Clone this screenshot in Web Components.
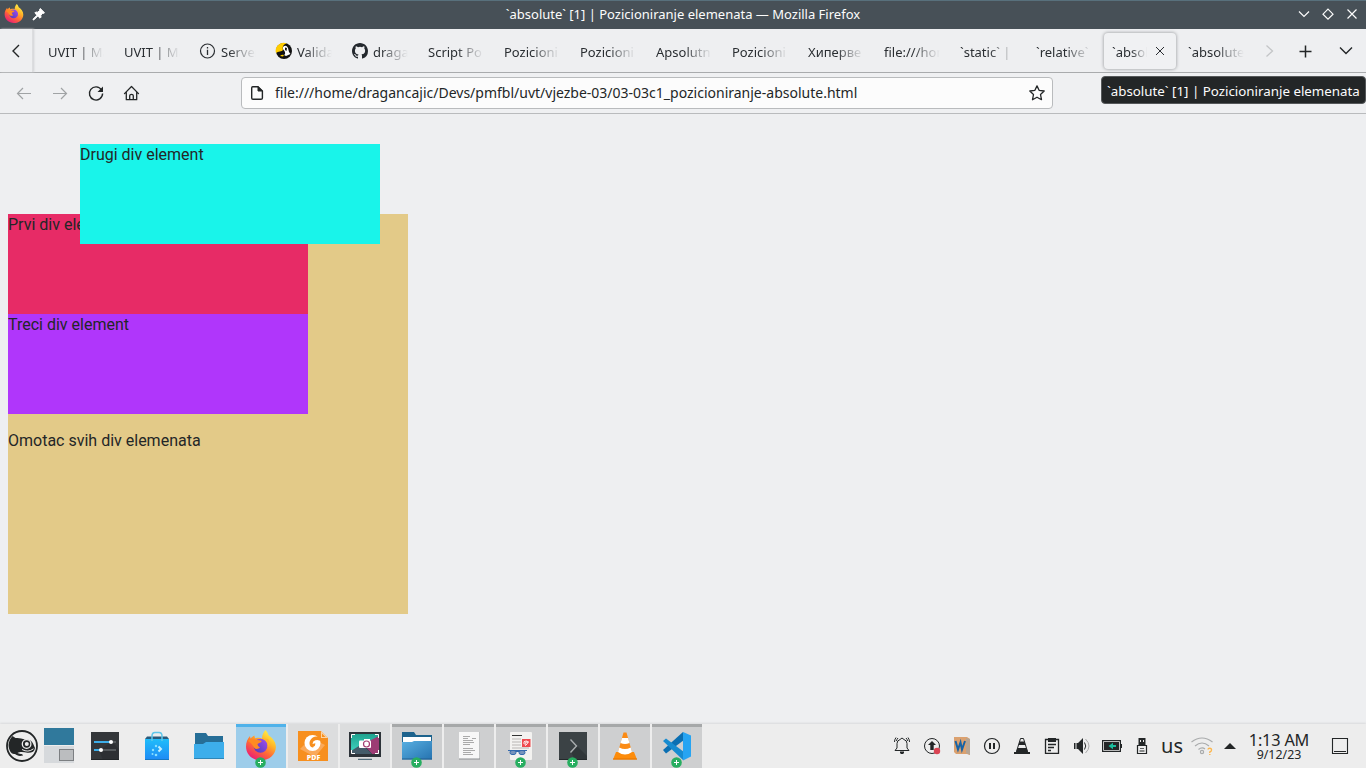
<!DOCTYPE html>
<html lang="en">
<head>
<meta charset="utf-8">
<title>`absolute` [1] | Pozicioniranje elemenata</title>
<style>
html,body{margin:0;height:100%}
body{font-family:"Noto Sans",sans-serif;color:#232627;background:#eeeff1;overflow:hidden}
</style>
</head>
<body>
<desk-top></desk-top>
<script>
const define=(name,html)=>customElements.define(name,class extends HTMLElement{
  connectedCallback(){
    if(this.shadowRoot)return;
    const root=this.attachShadow({mode:"open"});
    const t=document.createElement("template");
    t.innerHTML=typeof html==="function"?html(this):html;
    root.append(t.content.cloneNode(true));
  }
});

/* name: [size, markup] ; line icons inherit currentColor */
const fox=`<defs><linearGradient id="a" x1=".85" y1=".1" x2=".25" y2="1"><stop offset="0" stop-color="#fff04a"/><stop offset=".3" stop-color="#ffb728"/><stop offset=".6" stop-color="#ff6a35"/><stop offset="1" stop-color="#e9187a"/></linearGradient><linearGradient id="b" x1="0" y1="1" x2="1" y2="0"><stop offset="0" stop-color="#4a3bb8"/><stop offset="1" stop-color="#a44df0"/></linearGradient></defs>
<path fill="url(#a)" d="M20.500 0C22 1.500 23 3.500 23.500 5.200C27 7.500 31 11.500 30.900 17C30.700 24.500 24.300 30.400 16 30.400C7.500 30.400 1 24.500 1 16.500C1 12 2.500 9 5 6L5.500 8.500C7 6.800 8 6 9.500 5.400C9.500 7 9.800 7.800 10.500 8.300C13 7.500 15.500 7.700 17 8.500C17 5 18.500 2 20.500 0Z"/>
<circle cx="15.500" cy="15.800" r="7" fill="url(#b)"/>
<path fill="#ff8b22" d="M2.500 11C6 8.600 9 8.600 11 9.800C13 10.200 15.500 10.300 16.800 11C16.400 12.700 13 13 12.500 14.300C13 16 13.500 17 15 17.500C12.500 20 9 19 8 16C6.800 13.500 5 12 2.500 11Z"/>
<path fill="#ffb52c" d="M17 8.500C21 10 23.500 13.500 22.500 17.500C24.500 16 25 12 23 9Z"/>`;
const I={
firefox:[32,fox],
firefoxs:[20,`<g transform="translate(0 -1) scale(.625)">${fox}</g>`],
pin:[14,`<path fill="#fff" d="M8.300 .5L12.500 4.700L11.500 5.500L10.800 5.200L8.800 7.200L9 9.200L8 10.200L5.800 8L2 11.800L1 11.900L1.200 11L5 7.200L2.800 5L3.800 4L5.800 4.200L7.800 2.200L7.500 1.500Z"/>`],
down:[16,`<path stroke-width="1.200" d="M3 4.500L8 9.500L13 4.500"/>`],
diamond:[16,`<path stroke-width="1.200" d="M8 2.200L13 7.200L8 12.200L3 7.200Z"/>`],
x:[16,`<path stroke-width="1.200" d="M3.500 2.500L12.500 11.500M12.500 2.500L3.500 11.500"/>`],
xs:[16,`<path d="M4 4L12 12M12 4L4 12"/>`],
left:[16,`<path stroke-width="1.400" d="M11 2L5 8L11 14"/>`],
right:[16,`<path stroke-width="1.300" d="M4.500 2.500L10.500 8L4.500 13.500"/>`],
chev:[16,`<path stroke-width="1.400" d="M2 4.500L8 10.500L14 4.500"/>`],
plus:[16,`<path stroke-width="1.500" d="M8.500 2.500V14.500M2.500 8.500H14.500"/>`],
back:[16,`<path stroke-width="1.200" d="M15 8.500H1.500M7 3L1.500 8.500L7 14"/>`],
fwd:[16,`<path stroke-width="1.200" d="M1 8.500H14.500M9 3L14.500 8.500L9 14"/>`],
reload:[16,`<path stroke-width="1.400" d="M13.500 4.800A6.600 6.600 0 1 0 14.600 8.600"/><path fill="currentColor" stroke="none" d="M15 1.500V7H9.500Z"/>`],
home:[16,`<path stroke-width="1.300" stroke-linejoin="round" stroke-linecap="round" d="M.5 8.600L7.500 1.500L14.500 8.600M2.300 7.300V14.700H12.700V7.300M5.700 14.700V10.800Q5.700 9.300 7.500 9.300T9.300 10.800V14.700"/>`],
page:[16,`<path stroke-width="1.400" stroke-linejoin="round" d="M3.700 1.700H9L13.400 6V13Q13.400 14.300 12 14.300H4Q2.700 14.300 2.700 13V2.900Q2.700 1.700 3.700 1.700Z"/><path stroke-width="1" fill="currentColor" d="M9 1.700V6H13.400Z"/>`],
star:[16,`<path stroke-width="1.300" stroke-linejoin="round" d="M8 .9L10.100 5.300L15.200 6L11.500 9.500L12.500 14.700L8 12.200L3.500 14.700L4.500 9.500L.8 6L5.900 5.300Z"/>`],
info:[16,`<circle cx="7.500" cy="8" r="7" stroke-width="1.200"/><path stroke-width="1.300" d="M7.500 6.700V12M7.500 4V5.500"/>`],
valid:[16,`<g stroke="none"><circle cx="8" cy="8" r="8" fill="#111"/><path fill="#fc0" d="M0 10A8 8 0 0 1 11 .5C7.500 1 6 4 7 7C6 9 2 8 0 10ZM4 13Q6 11 8 12L7 13.500Z"/><path fill="#fff" d="M7 4Q10 1 12 5L13 9L14.500 11L10 13L8 12Q10 11 8.500 8Q6 6 7 4Z"/><path fill="#111" d="M9 4.500L11 5L10.500 8L9 7Z"/></g>`],
github:[16,`<path fill="#24292e" stroke="none" d="M8 0C3.580 0 0 3.580 0 8c0 3.540 2.290 6.530 5.470 7.590.4.070.55-.17.55-.38 0-.19-.01-.82-.01-1.490-2.010.37-2.530-.49-2.690-.94-.09-.23-.48-.94-.82-1.130-.28-.15-.68-.52-.01-.53.63-.01 1.080.58 1.230.82.72 1.210 1.870.87 2.330.66.070-.52.28-.87.51-1.070-1.780-.2-3.640-.89-3.640-3.950 0-.87.31-1.590.82-2.150-.08-.2-.36-1.020.08-2.120 0 0 .67-.21 2.200.82a7.600 7.600 0 0 1 4 0c1.530-1.040 2.200-.82 2.200-.82.44 1.100.16 1.920.08 2.120.51.56.82 1.270.82 2.150 0 3.070-1.870 3.750-3.650 3.950.29.25.54.73.54 1.480 0 1.070-.01 1.930-.01 2.200 0 .21.15.46.55.38A8 8 0 0 0 16 8c0-4.420-3.580-8-8-8Z"/>`],
suse:[32,`<circle cx="16" cy="16" r="15" stroke-width="1.800"/><path fill="currentColor" stroke="none" d="M6.500 6L9.500 8Q14 7.500 19 9.500Q25 9 27 13.500L29 18C28.500 21.500 26 23 21.500 22.800C18 22 14 21.500 11.500 23C13 24 17 23.500 17 25.500C13 26.500 11 25.500 9 24C5 25 2.500 19 2.500 15C3 11 4 8.500 6.500 6Z"/><circle cx="20.600" cy="14" r="4.300" fill="currentColor" stroke="#eee" stroke-width="1.300"/><circle cx="20.800" cy="14" r="2" fill="#eee" stroke="none"/><path stroke="#eee" d="M16 19.500Q22 23 27.500 18.800"/>`],
settings:[32,`<g stroke="none"><rect x="2" y="2" width="28" height="28" fill="#34373a"/><path fill="#25282b" d="M23 12L30 19V30H14L10 20Z" opacity=".5"/><path fill="#55595c" d="M22 11H27V13H22ZM13 19H27V21H13Z"/><path fill="#3daee9" d="M5 11H22V13H5ZM5 19H11V21H5Z"/><circle cx="22" cy="12" r="2" fill="#fff"/><circle cx="12" cy="20" r="2" fill="#fff"/><path fill="#222528" d="M2 29H30V30H2Z"/></g>`],
discover:[32,`<defs><linearGradient id="g" x2="0" y2="1"><stop stop-color="#20bdfa"/><stop offset="1" stop-color="#1e8af5"/></linearGradient></defs><g stroke="none"><path fill="#2a5b7b" d="M6 6.500H26L28 9H4Z"/><path fill="url(#g)" d="M4 9H28V30H4Z"/><path fill="#1677c4" d="M4 29H28V30H4Z"/><g fill="#8be0ff"><circle cx="12" cy="20" r="1.200"/><circle cx="15" cy="16" r="1.200"/><circle cx="11.500" cy="24" r="1"/><circle cx="15" cy="25" r="1.300"/></g></g><path stroke="#5fc6ea" stroke-width="1.500" d="M11 11V6Q11 2.500 14 2.500H18Q21 2.500 21 6V11"/><path stroke="#c2efff" stroke-width="2" d="M17.500 16.500L20 19L17.500 21.500"/>`],
folder:[32,`<g stroke="none"><path fill="#266e97" d="M2 3H13L15 6H30V14H2Z"/><path fill="#3daeeb" d="M1 14H10L13 12H31V29H1Z"/><path fill="#2f86b7" d="M1 28H31V29H1Z"/></g>`],
dolphin:[32,`<defs><linearGradient id="g" x2="1" y2="1"><stop stop-color="#58afe1"/><stop offset="1" stop-color="#2673b0"/></linearGradient></defs><g stroke="none"><path fill="#1d638d" d="M1 2H13L15 5H31V13H1Z"/><path fill="#fff" d="M2 7H30V12H2Z"/><path fill="url(#g)" d="M1 12H11L13 11H31V29.500H1Z"/><path fill="#205e8f" d="M1 28.500H31V29.500H1Z"/></g>`],
foxit:[32,`<g stroke="none"><path fill="#f78f1e" d="M1 1H24L31 8V31H1Z"/><path fill="#faa95a" d="M3 19L14 8L28 15L18 27Z"/><path fill="#fbd3a5" d="M24 1L31 8H24Z"/><path fill="#f78f1e" d="M25 3.500L28.500 7H25Z"/><circle cx="15.500" cy="13" r="8" fill="#fff"/><path fill="#f78f1e" d="M24 7L19 6.500C15 7 12.500 10 12.500 13.500Q12.700 17 15.500 17.500Q19 17 19 13L15.500 14Q16 10 20.500 10L24 11Z"/><path fill="#fff" d="M16 12Q19 9.500 23 12Q23 17 19 19L16 17Q18.500 16 18.500 13.500Z"/><text x="16.500" y="29.700" text-anchor="middle" font-family="Noto Sans" font-weight="900" font-size="7" fill="#fff">PDF</text></g>`],
spectacle:[32,`<defs><linearGradient id="g" x2="0" y2="1"><stop stop-color="#1fa38f"/><stop offset="1" stop-color="#42d4c2"/></linearGradient></defs><g stroke="none"><rect y="2" width="32" height="25" fill="#2d3339"/><path fill="url(#g)" d="M2 4H30V6L17 15L2 22Z"/><path fill="#9c3c74" d="M30 6V24H23L14 14Z"/><path fill="#445b69" d="M2 24V21L13 14L23 24Z"/><rect x="10" y="10.500" width="12" height="7.500" rx="1" fill="#fff"/><rect x="15" y="9" width="6" height="3" fill="#fff"/><circle cx="17.500" cy="14" r="3" fill="#fff" stroke="#a33f72" stroke-width="1.200"/><path fill="#bcc0c3" d="M9 28H23V29H9Z"/><path fill="#536e7c" d="M9 29H23V30H9Z"/></g><path stroke="#fff" d="M2.500 8V4.500H6M26 4.500H29.500V8M2.500 20V23.500H6M26 23.500H29.500V20"/>`],
doc:[32,`<g stroke="none"><rect x="6" y="2" width="21" height="27.500" fill="#8b8e90"/><rect x="6" y="2" width="20.500" height="26.500" fill="#f7f7f7"/></g><path stroke="#aaa" d="M10 6.500H17M10 8.500H15M19 8.500H23M10 10.500H20M10 12.500H21M10 14.500H17M10 18.500H20M10 20.500H22M10 22.500H18M10 24.500H20"/>`],
okular:[32,`<g stroke="none"><rect x="5" y="2" width="22" height="28" rx="1" fill="#f3f2f0"/><rect x="7" y="5" width="10" height="1" fill="#333"/><path fill="#d6d4d2" d="M7 8H16V10H7ZM7 11H16V13H7ZM7 14H16V16H7ZM7 17H24V19H7Z"/><rect x="17" y="9" width="8.500" height="8" fill="#ef4a4e"/></g><path stroke="#fff" stroke-width=".9" d="M19 14Q18 11 21 11T22 14T20 14T24 12"/><g stroke="#3469ad"><rect x="5" y="20.500" width="6" height="4" rx="2" fill="#7894bc"/><rect x="14" y="20.500" width="6" height="4" rx="2" fill="#7894bc"/><path d="M3 20.500H22M11 21.500H14"/></g>`],
konsole:[32,`<g stroke="none"><rect x="2" y="2" width="28" height="28" fill="#3b4245"/><path fill="#303639" d="M20 16L30 26V30H18L14 22Z"/><path fill="#24292b" d="M2 29H30V30H2Z"/></g><path stroke="#a9adaf" stroke-width="1.400" d="M13.500 9.500L19.500 16L13.500 22.500"/>`],
vlc:[32,`<g stroke="none"><path fill="#fd8c0b" d="M7 22H25L28 29.500H4Z"/><path fill="#e27300" d="M4 28.500H28V29.500H4Z"/><path fill="#fb8b15" d="M14.500 2.500H17.500L23 22Q16 27 9 22Z"/><path fill="#fff" d="M13 8H19L20.500 13Q16 15 11.500 13ZM10.300 17.500Q16 20.500 21.700 17.500L23 22Q16 27 9 22Z"/></g>`],
vscode:[32,`<g stroke="none"><path fill="#0b6fb2" d="M2 20L22 2L23 10L5 23.500Z"/><path fill="#168bd0" d="M2 11L5 8.500L23 22L22 30Z"/><path fill="#26a4f2" d="M22 2L30 5.500V26.500L22 30.500Z"/></g>`],
bell:[24,`<path d="M5 16.500H19L17 14V9.500Q17 6.500 14 5.500L12 4L10 5.500Q7 6.500 7 9.500V14Z"/><path d="M4.500 8Q4.500 5.500 6 3.500M6.500 7Q6.500 5.500 8 4M19.500 8Q19.500 5.500 18 3.500M17.500 7Q17.500 5.500 16 4"/><path fill="currentColor" stroke="none" d="M10 17.500H14V19L13 20H11L10 19Z"/>`],
update:[24,`<circle cx="12" cy="12" r="7.500"/><path fill="currentColor" stroke="none" d="M12 7L16 11H13.700V16H10.300V11H8Z"/><circle cx="17" cy="17" r="3.200" fill="#da4453" stroke="none"/>`],
word:[24,`<g stroke="none"><path fill="#dba16f" d="M4 3H17L20 5V21L17 20H6L4 18Z"/><path fill="#b6a594" d="M16 4L20 5V21L16 19Z"/></g><path stroke="#1763a5" stroke-width="2" d="M5.500 7L8 15.500L10.500 8.500L12 15.500L15 7"/>`],
pause:[24,`<circle cx="12" cy="12" r="7.500" stroke-width="1.200"/><path stroke-width="2" d="M10 9V15M14 9V15"/>`],
cone:[24,`<path d="M10.500 4.500H13.500L17.500 17.500H6.500Z"/><path fill="currentColor" stroke="none" d="M9.500 7.500H14.500L15.500 11H8.500ZM7.500 14H16.500L18 18H20V20H4V18H6Z"/>`],
clip:[24,`<path stroke-width="1.300" d="M5.500 5.500H18.500V19.300H5.500ZM8 10.500H16M8 13.500H14M8 16.500H11"/><path fill="currentColor" stroke="none" d="M8 4H16V8H8Z"/>`],
sound:[24,`<path fill="currentColor" stroke="none" d="M4 9H5.500V15H4ZM6.500 9H8L13 4V20L8 15H6.500Z"/><path d="M14.500 8.500Q17 12 14.500 15.500"/><path stroke="#aaa" d="M15.500 5Q22.500 12 15.500 19"/>`],
battery:[24,`<path stroke-width="1.200" d="M2.600 6.600H20.400V17.400H2.600Z"/><path fill="currentColor" stroke="none" d="M21 10H22V14H21ZM4 8H19V16H4Z"/><path fill="#1abc9c" stroke="none" d="M8.500 12L13 8.800V11H16V13H13V15.200Z"/>`],
usb:[24,`<path stroke-width="1.200" d="M7.500 11.500H16.500V19.500H7.500ZM9.500 17H14.500"/><path fill="currentColor" stroke="none" d="M8.500 4H15.500V11H8.500Z"/><path stroke="#eee" d="M10.500 6V8M13.500 6V8"/><path d="M10 14.500H14" stroke-width=".7"/>`],
wifi:[24,`<g stroke="#a9abac" stroke-width="1.200"><path d="M1.500 8Q12 0 22.500 8M5 12Q12 6 19 12M8.500 15.500Q12 12.500 15 15"/><circle cx="12" cy="18" r="1.600"/></g><path stroke="#fdb64b" stroke-width="1.400" d="M18 15.500Q18 14.300 19.800 14.300T21.500 16T19.800 18V19M19.800 20V21"/>`],
arrow:[24,`<path fill="currentColor" stroke="none" d="M12 9L18 15H6Z"/>`],
desk:[24,`<path stroke-width="1.100" d="M4.500 4.500H19.500V19.500H4.500ZM6 17.500H18"/>`]
};
define("ui-icon",el=>{const [s,m]=I[el.getAttribute("name")];
 return `<style>:host{display:block;width:${s}px;height:${s}px;flex:none}svg{display:block;overflow:visible}</style><svg width="${s}" height="${s}" viewBox="0 0 ${s} ${s}" fill="none" stroke="${el.getAttribute("name").startsWith("firefox")?"none":"currentColor"}">${m}</svg>`});

define("title-bar",`<style>
:host{display:grid;grid-template-columns:70px 1fr 70px;align-items:center;height:29px;box-sizing:border-box;background:#475057;border-top:1px solid #58707c;color:#fcfcfc;font-size:13px}
.l,.r{display:flex;align-items:center}.l{padding-left:4px;gap:8px}.r{gap:8px}
.t{text-align:center;line-height:18px;padding-bottom:2px}
</style><div class="l"><ui-icon name="firefoxs"></ui-icon><ui-icon name="pin"></ui-icon></div><div class="t"><slot></slot></div><div class="r"><ui-icon name="down"></ui-icon><ui-icon name="diamond"></ui-icon><ui-icon name="x"></ui-icon></div>`);

define("browser-tab",el=>`<style>
:host{display:flex;align-items:center;box-sizing:border-box;width:72px;height:36px;margin:0 2px;padding:0 8px;border-radius:4px;font-size:13px;color:#2a2e32}
:host([active]){background:#f0f1f3;box-shadow:0 0 3px 1px #b4b6b9}
ui-icon{margin-right:5px}
span{flex:1;min-width:0;overflow:hidden;white-space:pre;line-height:20px;padding-top:2px;-webkit-mask-image:linear-gradient(to left,transparent,rgba(0,0,0,.45) 14px,#000 27px);mask-image:linear-gradient(to left,transparent,rgba(0,0,0,.45) 14px,#000 27px)}
:host([active]) span{-webkit-mask-image:linear-gradient(to left,transparent,#000 16px);mask-image:linear-gradient(to left,transparent,#000 16px)}
ui-icon[name=xs]{margin:0 0 0 5px}
</style>${el.hasAttribute("icon")?`<ui-icon name="${el.getAttribute("icon")}"></ui-icon>`:""}<span><slot></slot></span>${el.hasAttribute("active")?`<ui-icon name="xs"></ui-icon>`:""}`);

define("tab-strip",`<style>
:host{display:flex;align-items:center;height:44px;box-sizing:border-box;border-bottom:1px solid #a9abad;background:#eeeff1}
.s{display:flex;align-items:center;height:100%;width:33px;box-sizing:border-box;padding-left:8px;border-right:1px solid #dcdddf;box-shadow:1px 0 2px #cfd1d3}
.tabs{display:flex;align-items:center;margin-left:5px;width:1216px}
.n{color:#c3c5c7;margin-left:8px}.p{margin-left:19px}.c{margin-left:25px}
</style><div class="s"><ui-icon name="left"></ui-icon></div><div class="tabs"><slot></slot></div><ui-icon class="n" name="right"></ui-icon><ui-icon class="p" name="plus"></ui-icon><ui-icon class="c" name="chev"></ui-icon>`);

define("nav-bar",`<style>
:host{display:flex;align-items:center;height:41px;box-sizing:border-box;border-bottom:1px solid #b9bbbd;background:#eff0f2;padding-left:16px}
.b{display:flex;gap:20px}.d{color:#a0a3a5}
.u{display:flex;align-items:center;box-sizing:border-box;width:812px;height:32px;margin-left:101px;border:1px solid #b9bbbd;border-radius:4px;background:#fcfcfc;padding:0 7px}
.u span{flex:1;margin-left:10px;font-size:14px;line-height:24px}
</style><div class="b"><ui-icon class="d" name="back"></ui-icon><ui-icon class="d" name="fwd"></ui-icon><ui-icon name="reload"></ui-icon><ui-icon name="home"></ui-icon></div><div class="u"><ui-icon name="page"></ui-icon><span><slot></slot></span><ui-icon name="star"></ui-icon></div>`);

define("tool-tip",`<style>
:host{position:absolute;right:0;top:76px;width:265px;height:28px;box-sizing:border-box;border:1px solid #55585a;border-radius:4px;background:#232627;color:#fcfcfc;font-size:13.330px;line-height:28px;padding-left:5px;white-space:nowrap}
</style><slot></slot>`);

define("color-box",el=>`<style>
:host{display:block;width:300px;height:100px;font:16px/22px Roboto,sans-serif;background:${el.getAttribute("color")}}
:host([lifted]){position:absolute;top:30px;left:80px}
</style><slot></slot>`);

define("page-view",`<style>
:host{display:block;position:relative;height:610px;box-sizing:border-box;padding:100px 8px 0;background:#eeeff1}
.w{width:400px;height:400px;background:#e3ca88;font:16px/22px Roboto,sans-serif}
p{margin:16px 0}
</style><div class="w"><color-box color="#e72b66">Prvi div element</color-box><color-box lifted color="#19f4ea">Drugi div element</color-box><color-box color="#b036fb">Treci div element</color-box><p>Omotac svih div elemenata</p></div>`);

define("task-button",el=>`<style>
:host{display:flex;position:relative;align-items:center;justify-content:center;width:50px;height:44px;box-sizing:border-box;background:#dcddde}
:host([open]){background:#cecfd0;box-shadow:inset 0 3px #a6a8a9}
:host([current]){background:#9dcdea;box-shadow:inset 0 3px #4fb2ea}
.e{position:absolute;left:19px;top:33px}
</style><ui-icon name="${el.getAttribute("icon")}"></ui-icon>${el.hasAttribute("plus")?`<svg class="e" width="11" height="11" viewBox="0 0 11 11"><circle cx="5.500" cy="5.500" r="5.300" fill="#27ae60"/><path stroke="#fff" d="M5.500 3V8M3 5.500H8"/></svg>`:""}`);

define("desk-pager",`<style>
:host{display:grid;width:30px;grid-template-rows:17px 17px;gap:1px;margin-bottom:2px}
.a{background:#30799c}.b{background:#d6d9dc;display:flex;justify-content:flex-end;align-items:flex-end}
i{width:15px;height:12px;box-sizing:border-box;border:1px solid #7c7f82;background:#bbbdbf;margin-bottom:2px}
</style><div class="a"></div><div class="b"><i></i></div>`);

define("task-bar",`<style>
:host{display:flex;align-items:center;height:44px;background:#ededed;box-shadow:0 -1px 2px #d8d9db;position:relative}
.s{margin:0 6px}.q{display:flex;align-items:center;justify-content:center;width:52px}
.l{display:flex;margin-left:5px}.t{display:flex;gap:2px;margin-left:1px}
.y{display:flex;margin-left:auto;gap:6px;padding-right:3px}
.us{width:30px;text-align:center;font-size:20px;line-height:28px}
.w{display:flex;margin-left:3px;gap:4px}
.k{width:72px;text-align:center;margin-left:1px}
.k b,.k small{display:block;font-weight:400}.k b{font-size:16.300px;line-height:16px;letter-spacing:-.2px}.k small{font-size:12.400px;line-height:13px}
.d{margin:0 14px 0 13px}
</style><ui-icon class="s" name="suse"></ui-icon><desk-pager></desk-pager>
<div class="l"><div class="q"><ui-icon name="settings"></ui-icon></div><div class="q"><ui-icon name="discover"></ui-icon></div><div class="q"><ui-icon name="folder"></ui-icon></div></div>
<div class="t"><task-button current plus icon="firefox"></task-button><task-button icon="foxit"></task-button><task-button icon="spectacle"></task-button><task-button open plus icon="dolphin"></task-button><task-button open icon="doc"></task-button><task-button open plus icon="okular"></task-button><task-button open plus icon="konsole"></task-button><task-button open icon="vlc"></task-button><task-button open plus icon="vscode"></task-button></div>
<div class="y">${["bell","update","word","pause","cone","clip","sound","battery","usb"].map(n=>`<ui-icon name="${n}"></ui-icon>`).join("")}</div>
<div class="us">us</div><div class="w"><ui-icon name="wifi"></ui-icon><ui-icon name="arrow"></ui-icon></div>
<div class="k"><b>1:13 AM</b><small>9/12/23</small></div><ui-icon class="d" name="desk"></ui-icon>`);

const tabs=[["UVIT | Ma"],["UVIT | Ma"],["Server","info"],["Valida","valid"],["dragan","github"],["Script Po"],["Pozicioni"],["Pozicioni"],["Apsolutn"],["Pozicioni"],["Хиперве"],["file:///hom"],["`static` |"],["`relative`"],["`absol",0,1],["`absolute"]];
define("desk-top",`<style>
:host{display:flex;flex-direction:column;width:1366px;height:768px;position:relative;overflow:hidden}
title-bar,tab-strip,nav-bar,page-view,task-bar{flex:none}
</style><title-bar>\`absolute\` [1] | Pozicioniranje elemenata — Mozilla Firefox</title-bar>
<tab-strip>${tabs.map(([t,i,a])=>`<browser-tab${i?` icon="${i}"`:""}${a?" active":""}>${t}</browser-tab>`).join("")}</tab-strip>
<nav-bar>file:///home/dragancajic/Devs/pmfbl/uvt/vjezbe-03/03-03c1_pozicioniranje-absolute.html</nav-bar>
<page-view></page-view><task-bar></task-bar><tool-tip>\`absolute\` [1] | Pozicioniranje elemenata</tool-tip>`);
</script>
</body>
</html>
